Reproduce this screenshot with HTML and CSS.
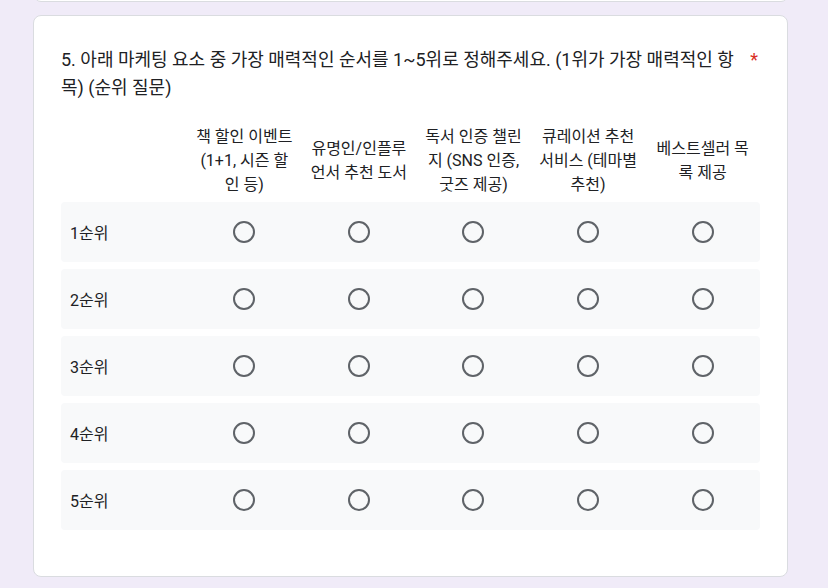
FILE: index.html
```html
<!DOCTYPE html>
<html lang="ko">
<head>
    <meta charset="UTF-8">
    <meta name="viewport" content="width=device-width, initial-scale=1.0">
    <title>순위 질문</title>
    <link rel="stylesheet" href="styles.css">
</head>
<body>
    <div class="prev-card"></div>

    <div class="question-card">
        <div class="question-title">
            <span class="title-text">5. 아래 마케팅 요소 중 가장 매력적인 순서를 1~5위로 정해주세요. (1위가 가장 매력적인 항목) (순위 질문)</span>
            <span class="required">*</span>
        </div>

        <div class="grid">
            <div class="grid-head">
                <div></div>
                <div class="col-label">책 할인 이벤트 (1+1, 시즌 할인 등)</div>
                <div class="col-label">유명인/인플루언서 추천 도서</div>
                <div class="col-label">독서 인증 챌린지 (SNS 인증, 굿즈 제공)</div>
                <div class="col-label">큐레이션 추천 서비스 (테마별 추천)</div>
                <div class="col-label">베스트셀러 목록 제공</div>
            </div>

            <div class="grid-row">
                <div class="row-label">1순위</div>
                <div class="cell"><span class="radio"></span></div>
                <div class="cell"><span class="radio"></span></div>
                <div class="cell"><span class="radio"></span></div>
                <div class="cell"><span class="radio"></span></div>
                <div class="cell"><span class="radio"></span></div>
            </div>
            <div class="grid-row">
                <div class="row-label">2순위</div>
                <div class="cell"><span class="radio"></span></div>
                <div class="cell"><span class="radio"></span></div>
                <div class="cell"><span class="radio"></span></div>
                <div class="cell"><span class="radio"></span></div>
                <div class="cell"><span class="radio"></span></div>
            </div>
            <div class="grid-row">
                <div class="row-label">3순위</div>
                <div class="cell"><span class="radio"></span></div>
                <div class="cell"><span class="radio"></span></div>
                <div class="cell"><span class="radio"></span></div>
                <div class="cell"><span class="radio"></span></div>
                <div class="cell"><span class="radio"></span></div>
            </div>
            <div class="grid-row">
                <div class="row-label">4순위</div>
                <div class="cell"><span class="radio"></span></div>
                <div class="cell"><span class="radio"></span></div>
                <div class="cell"><span class="radio"></span></div>
                <div class="cell"><span class="radio"></span></div>
                <div class="cell"><span class="radio"></span></div>
            </div>
            <div class="grid-row">
                <div class="row-label">5순위</div>
                <div class="cell"><span class="radio"></span></div>
                <div class="cell"><span class="radio"></span></div>
                <div class="cell"><span class="radio"></span></div>
                <div class="cell"><span class="radio"></span></div>
                <div class="cell"><span class="radio"></span></div>
            </div>
        </div>
    </div>
</body>
</html>
```

FILE: styles.css
```css
body {
    margin: 0;
    padding: 0 40px 0 33px;
    background: #f0ebf8;
    font-family: Roboto, "Noto Sans CJK KR", sans-serif;
    color: #202124;
}

.prev-card {
    height: 12px;
    margin: -12px 0 13px 1px;
    background: #ffffff;
    border: 1px solid #dadce0;
    border-radius: 8px;
}

.question-card {
    background: #ffffff;
    border: 1px solid #dadce0;
    border-radius: 8px;
    padding: 30px 27px 46px 27px;
}

.question-title {
    display: flex;
    align-items: flex-start;
    font-size: 18px;
    line-height: 28px;
    margin-bottom: 23px;
    word-break: break-all;
}
.title-text {
    flex: 1;
    padding-right: 4px;
}
.required {
    color: #d93025;
    padding-right: 2px;
}

.grid {
    display: flex;
    flex-direction: column;
    gap: 7px;
}
.grid-head,
.grid-row {
    display: grid;
    grid-template-columns: 126px repeat(5, 1fr);
}
.grid-head {
    align-items: center;
    margin-bottom: -2px;
}
.col-label {
    text-align: center;
    font-size: 16px;
    line-height: 24px;
    padding: 0 8px;
    word-break: break-all;
}
.grid-row {
    height: 60px;
    align-items: center;
    background: #f8f9fa;
    border-radius: 4px;
}
.row-label {
    padding-left: 9px;
    font-size: 16px;
}
.cell {
    display: flex;
    justify-content: center;
}
.radio {
    width: 18px;
    height: 18px;
    border: 2px solid #5f6368;
    border-radius: 50%;
}
```
